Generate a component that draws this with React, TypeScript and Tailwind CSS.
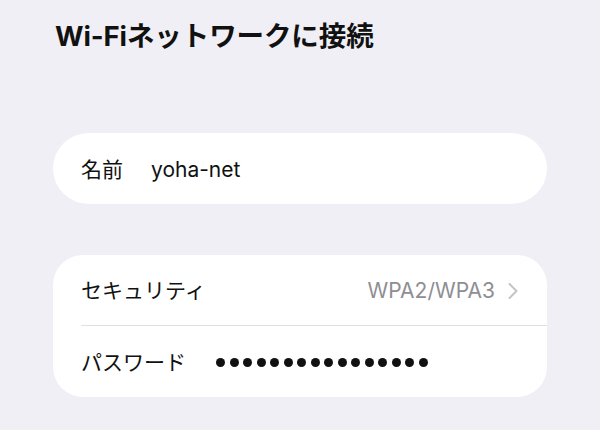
import { ChevronRight } from 'lucide-react'

const font = { fontFamily: 'Inter, "Noto Sans CJK JP", sans-serif' }

function Dots({ count }: { count: number }) {
  return (
    <div className="flex items-center gap-[4.5px]">
      {Array.from({ length: count }).map((_, i) => (
        <span key={i} className="block h-[9px] w-[9px] rounded-full bg-[#111111]" />
      ))}
    </div>
  )
}

export default function App() {
  return (
    <div
      className="h-[430px] w-[600px] bg-[#f0eff5] pl-[53px] pr-[53px] pt-[19px] text-[#111111]"
      style={font}
    >
      {/* Title */}
      <h1 className="pl-[2px] text-[27.5px] font-bold leading-[34px] tracking-[-0.1px]">
        Wi-Fiネットワークに接続
      </h1>

      {/* Name card */}
      <div className="mt-[80px] flex h-[71px] items-center rounded-full bg-white pl-[28px] pt-[2px] text-[21px]">
        <span>名前</span>
        <span className="ml-[28px]">yoha-net</span>
      </div>

      {/* Security / password card */}
      <div className="mt-[51px] rounded-[30px] bg-white pl-[28px] text-[21px]">
        <div className="flex h-[71px] items-center border-b border-[#e0e0e4] pr-[20px] pt-[2px]">
          <span>セキュリティ</span>
          <span className="ml-auto text-[#8e8e93]">WPA2/WPA3</span>
          <ChevronRight size={28} strokeWidth={1.7} className="ml-[4px] text-[#c4c4c8]" />
        </div>
        <div className="flex h-[71px] items-center pt-[2px]">
          <span>パスワード</span>
          <div className="ml-[30px]">
            <Dots count={16} />
          </div>
        </div>
      </div>
    </div>
  )
}
